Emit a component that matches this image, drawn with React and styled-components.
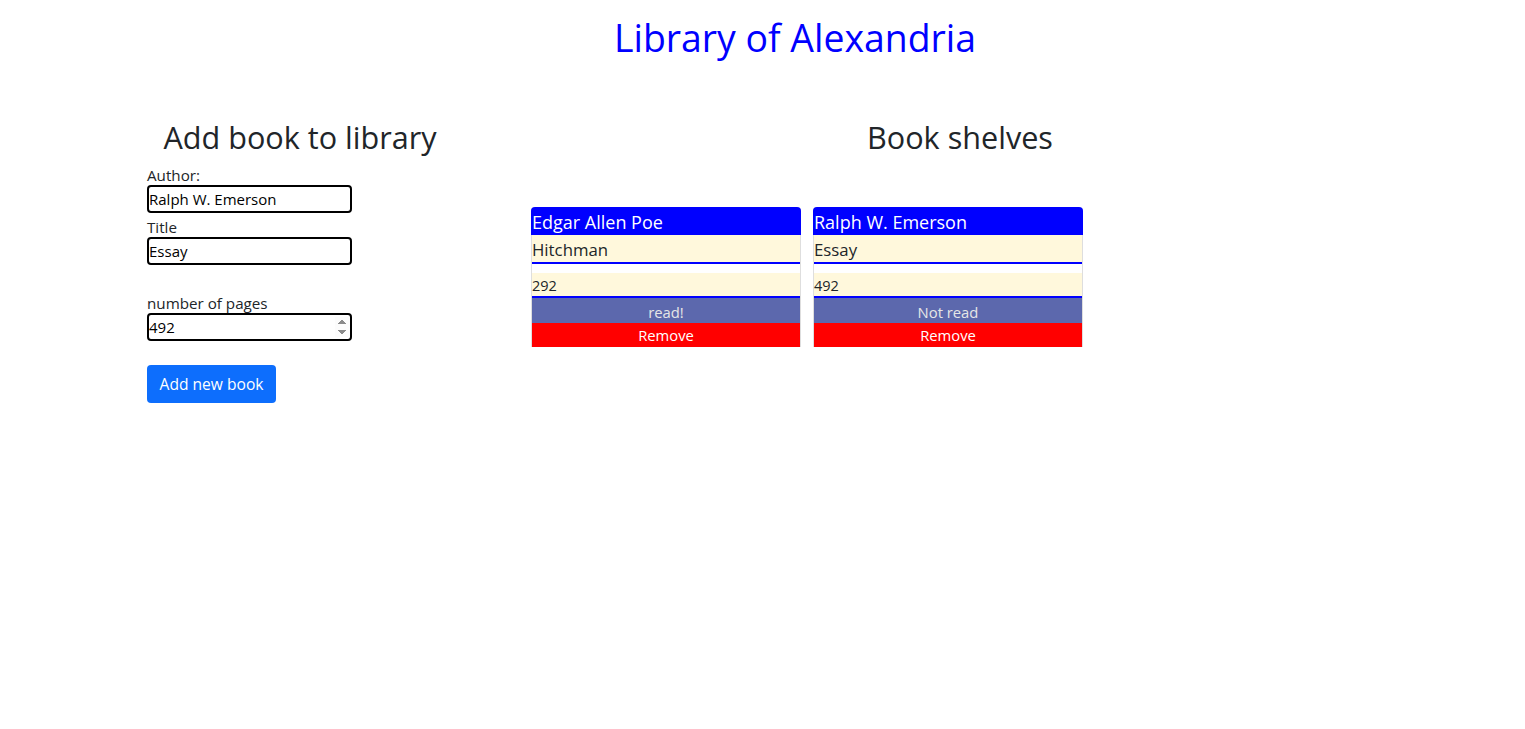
import React from "react";
import styled, { createGlobalStyle } from "styled-components";

const GlobalStyle = createGlobalStyle`
  body {
    margin: 0;
    font-family: "Open Sans", "Noto Sans", sans-serif;
    color: #212529;
    background: #fff;
  }
  * { box-sizing: border-box; }
`;

const Page = styled.div`
  width: 1525px;
  min-height: 729px;
`;

const Header = styled.h1`
  margin: 0;
  padding: 12px 0 0 65px;
  text-align: center;
  font-weight: 400;
  font-size: 37.4px;
  line-height: 52px;
  color: #0000ff;
`;

const Main = styled.div`
  display: flex;
  padding: 54px 0 0 147px;
`;

const FormColumn = styled.div`
  width: 306px;
  display: flex;
  flex-direction: column;
`;

const ShelfColumn = styled.div`
  width: 858px;
  margin-left: 78px;
`;

const Heading = styled.h2`
  margin: 0;
  text-align: center;
  font-weight: 400;
  font-size: 30.6px;
  line-height: 38px;
`;

const Label = styled.label`
  font-size: 15.2px;
  line-height: 20px;
  margin-top: ${p => p.$top || 0}px;
`;

const Input = styled.input`
  width: 205px;
  height: 28px;
  border: 2px solid #000;
  border-radius: 4px;
  padding: 0;
  font-family: inherit;
  font-size: 15px;
  color: #000;
  &::-webkit-inner-spin-button {
    opacity: 1;
  }
`;

const Button = styled.button`
  align-self: flex-start;
  margin-top: 24px;
  background: #0d6efd;
  color: #fff;
  border: none;
  border-radius: 4px;
  height: 38px;
  width: 129px;
  padding: 0;
  font-family: inherit;
  font-size: 15.6px;
`;

const Shelf = styled.div`
  display: flex;
  flex-wrap: wrap;
  gap: 12px;
  margin-top: 51px;
`;

const Card = styled.div`
  width: 270px;
  border: 1px solid #dedede;
  border-top: none;
  border-bottom: none;
  border-radius: 4px 4px 0 0;
  background: #fff;
`;

const CardAuthor = styled.div`
  height: 28px;
  margin: 0 -1px;
  padding-left: 1px;
  background: #0000ff;
  color: #fff;
  font-size: 18px;
  line-height: 31px;
  border-radius: 4px 4px 0 0;
  white-space: nowrap;
`;

const Field = styled.div`
  background: #fff8dc;
  border-bottom: 2px solid #0000ff;
  height: ${p => p.$h}px;
  margin-top: ${p => p.$top || 0}px;
  font-size: ${p => p.$size}px;
  line-height: ${p => p.$h}px;
`;

const ReadButton = styled.div`
  height: 25px;
  background: #5c68ad;
  color: #e6e6e6;
  text-align: center;
  font-size: 14.8px;
  line-height: 28px;
`;

const RemoveButton = styled.div`
  height: 24px;
  background: #ff0000;
  color: #fff;
  text-align: center;
  font-size: 14.8px;
  line-height: 25px;
`;

const books = [
  { author: "Edgar Allen Poe", title: "Hitchman", pages: 292, read: true },
  { author: "Ralph W. Emerson", title: "Essay", pages: 492, read: false }
];

export default () => (
  <Page>
    <GlobalStyle />
    <Header>Library of Alexandria</Header>
    <Main>
      <FormColumn>
        <Heading>Add book to library</Heading>
        <Label $top={9}>Author:</Label>
        <Input defaultValue="Ralph W. Emerson" />
        <Label $top={4}>Title</Label>
        <Input defaultValue="Essay" />
        <Label $top={28}>number of pages</Label>
        <Input type="number" defaultValue={492} />
        <Button>Add new book</Button>
      </FormColumn>
      <ShelfColumn>
        <Heading>Book shelves</Heading>
        <Shelf>
          {books.map(b => (
            <Card key={b.author}>
              <CardAuthor>{b.author}</CardAuthor>
              <Field $h={29} $size={16.8}>{b.title}</Field>
              <Field $h={25} $top={9} $size={14.5}>{b.pages}</Field>
              <ReadButton>{b.read ? "read!" : "Not read"}</ReadButton>
              <RemoveButton>Remove</RemoveButton>
            </Card>
          ))}
        </Shelf>
      </ShelfColumn>
    </Main>
  </Page>
);
